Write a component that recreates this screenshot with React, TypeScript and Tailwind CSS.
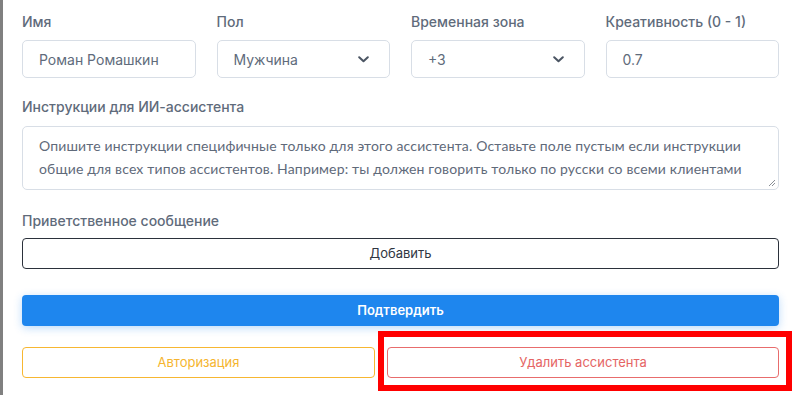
import { ReactNode } from 'react'

const font = { fontFamily: 'Inter, "Noto Sans", sans-serif' }

function Label({ children }: { children: ReactNode }) {
  return <div className="h-5 text-[14px] leading-5 font-medium text-[#5f6b7b]">{children}</div>
}

function Field({ label, value, select }: { label: string; value: string; select?: boolean }) {
  return (
    <div className="flex flex-col gap-2">
      <Label>{label}</Label>
      <div className="h-[38px] rounded-[5px] border border-[#d8dee6] flex items-center justify-between pl-4 pr-5 text-[14px] text-[#606b7b]">
        <span>{value}</span>
        {select && (
          <svg width="11" height="7" viewBox="0 0 11 7" fill="none">
            <path d="M1.2 1.2 5.5 5.3 9.8 1.2" stroke="#4b5563" strokeWidth="2" strokeLinecap="round" strokeLinejoin="round" />
          </svg>
        )}
      </div>
    </div>
  )
}

export default function App() {
  return (
    <div className="relative w-[795px] h-[395px] overflow-hidden bg-white flex" style={font}>
      {/* left edge of the page behind the modal */}
      <div className="w-[3px] bg-[#808080] shrink-0" />

      <div className="flex-1 flex flex-col pl-[19px] pr-[16px] pt-3">
        <div className="grid grid-cols-4 gap-x-[21px]">
          <Field label="Имя" value="Роман Ромашкин" />
          <Field label="Пол" value="Мужчина" select />
          <Field label="Временная зона" value="+3" select />
          <Field label="Креативность (0 - 1)" value="0.7" />
        </div>

        <div className="mt-[19px] flex flex-col gap-[9px]">
          <Label>Инструкции для ИИ-ассистента</Label>
          <div className="relative h-[64px] rounded-[5px] border border-[#d8dee6] px-4 pt-[7px] text-[14px] leading-[23px] text-[#5f6a7a] whitespace-nowrap font-['Lato',sans-serif] tracking-[0.15px]">
            Опишите инструкции специфичные только для этого ассистента. Оставьте поле пустым если инструкции
            <br />
            общие для всех типов ассистентов. Например: ты должен говорить только по русски со всеми клиентами
            <svg className="absolute right-[2px] bottom-[2px]" width="8" height="8" viewBox="0 0 8 8">
              <path d="M7 1 1 7M7 4 4 7" stroke="#8a8f96" strokeWidth="1" />
            </svg>
          </div>
        </div>

        <div className="mt-[21px] flex flex-col gap-[7px]">
          <Label>Приветственное сообщение</Label>
          <button className="h-[31px] rounded-[4px] border border-[#2b313b] text-[13px] text-[#2f3642]">
            Добавить
          </button>
        </div>

        <button className="mt-[26px] h-[31px] rounded-[4px] bg-[#1e86ee] text-white text-[13px] font-semibold shadow-[0_2px_8px_rgba(30,134,238,0.3)]">
          Подтвердить
        </button>

        <div className="mt-[21px] flex gap-3">
          <button className="w-[353px] h-[31px] rounded-[4px] border border-[#f7b731] text-[13px] text-[#f5b52f]">
            Авторизация
          </button>
          <button className="flex-1 h-[31px] rounded-[4px] border border-[#e86c6c] text-[13px] text-[#e56565]">
            Удалить ассистента
          </button>
        </div>
      </div>

      {/* highlight annotation */}
      <div className="absolute left-[378px] top-[331px] w-[414px] h-[60px] border-[6px] border-[#ff0000]" />
    </div>
  )
}
